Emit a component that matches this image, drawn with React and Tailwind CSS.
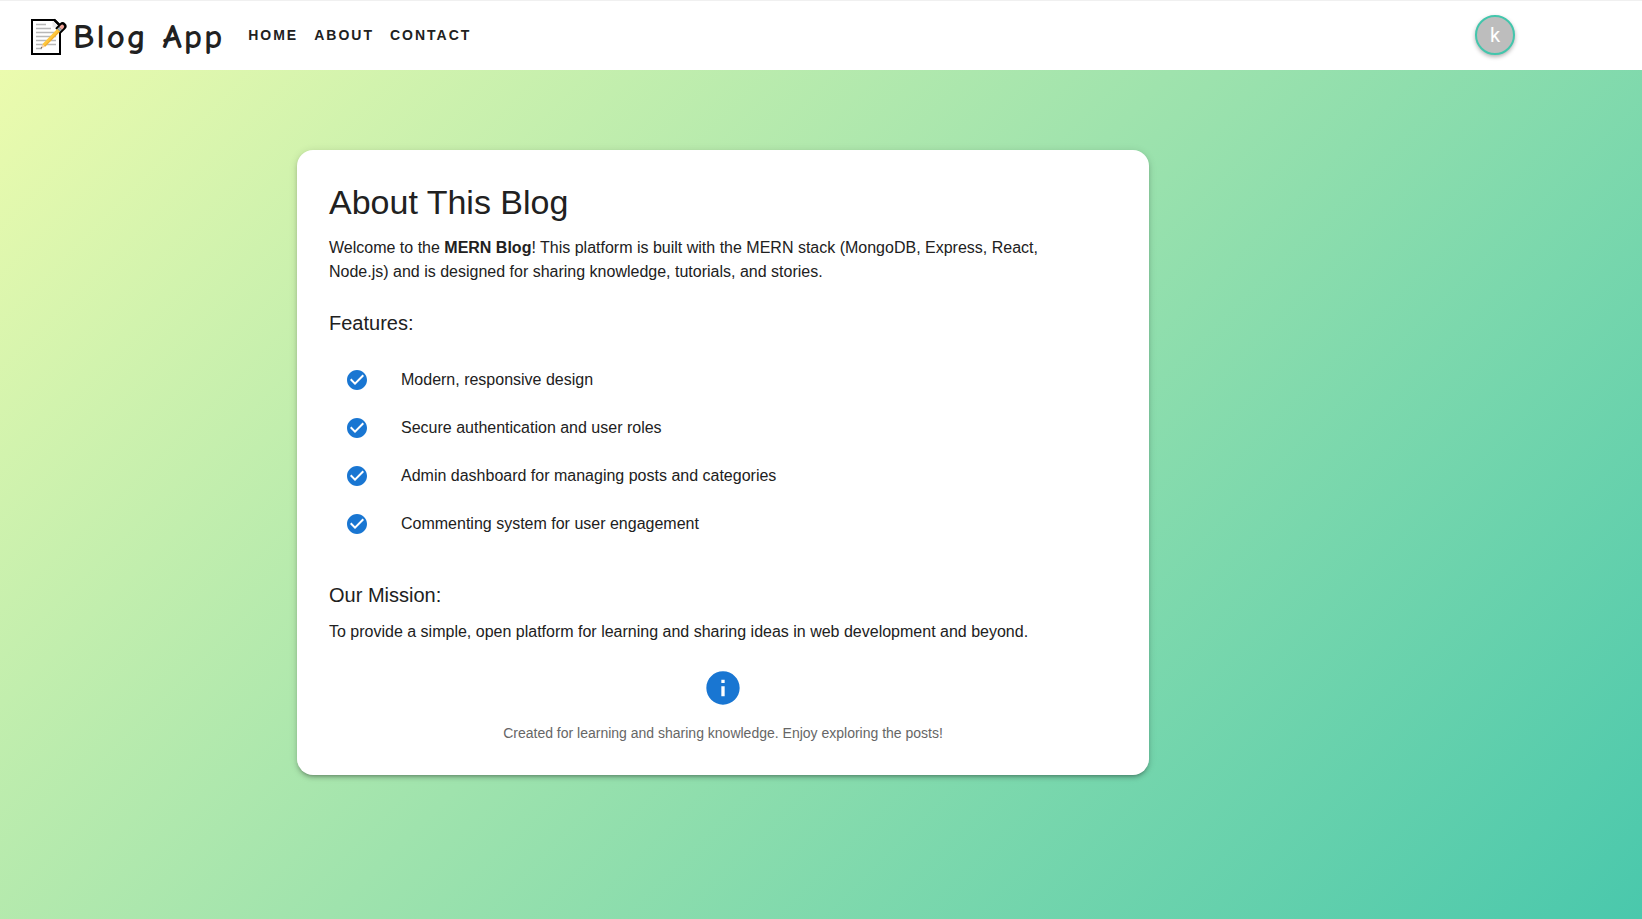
import React from "react";

const features = [
  "Modern, responsive design",
  "Secure authentication and user roles",
  "Admin dashboard for managing posts and categories",
  "Commenting system for user engagement",
];

const links = ["Home", "About", "Contact"];

function MemoIcon() {
  return (
    <svg viewBox="0 0 38 38" className="h-[38px] w-[38px] shrink-0" aria-hidden="true">
      <path d="M1 2H23.5L29 7.5V36H1Z" fill="#fff" stroke="#000" strokeWidth="2" />
      <path d="M21.5 3V9.5H28Z" fill="#e9e9e9" />
      <path
        d="M5 6.5H15M5 10.5H20M5 14.5H24M5 18.5H25M5 22.5H25M5 26.5H25M5 30.5H11"
        stroke="#b8b8b8"
        strokeWidth="1.3"
      />
      <path d="M23 1.6L30 8.6" stroke="#000" strokeWidth="2.4" />
      <g transform="translate(9.5 30.7) rotate(-45.5)">
        <path d="M25 -3.9H31.5A3.9 3.9 0 0 1 31.5 3.9H25Z" fill="#000" />
        <path d="M4.5 -1.9H26V1.9H4.5Z" fill="#ffc83d" />
        <path d="M4.5 0.7H26V1.9H4.5Z" fill="#f2ac2e" />
        <path d="M4.5 -1.9V1.9L0 0Z" fill="#f4d0a8" />
        <path d="M1.8 -0.8V0.8L0 0Z" fill="#555" />
        <path d="M26 -1.9H28.6V1.9H26Z" fill="#9fb4bd" />
        <path d="M28.6 -1.9H31A1.9 1.9 0 0 1 31 1.9H28.6Z" fill="#f0a498" />
      </g>
    </svg>
  );
}

function CheckCircle() {
  return (
    <svg viewBox="0 0 24 24" className="h-6 w-6 shrink-0 fill-[#1976d2]" aria-hidden="true">
      <path d="M12 2C6.48 2 2 6.48 2 12s4.48 10 10 10 10-4.48 10-10S17.52 2 12 2m-2 15-5-5 1.41-1.41L10 14.17l7.59-7.59L19 8z" />
    </svg>
  );
}

function InfoIcon() {
  return (
    <svg viewBox="0 0 24 24" className="h-10 w-10 fill-[#1976d2]" aria-hidden="true">
      <path d="M12 2C6.48 2 2 6.48 2 12s4.48 10 10 10 10-4.48 10-10S17.52 2 12 2m1 15h-2v-6h2zm0-8h-2V7h2z" />
    </svg>
  );
}

export default function App() {
  return (
    <div className="flex min-h-screen flex-col bg-linear-[135deg,#f8ffae_-5%,#43c6ac_104%] font-['Liberation_Sans',Arial,sans-serif] text-[#212121]">
      <header className="flex h-[70px] items-center bg-white pr-[127px] pl-[31px] shadow-[inset_0_1px_0_#f0f0f0]">
        <a href="#home" className="flex items-center gap-1 pt-1">
          <MemoIcon />
          <span className="font-['Comic_Sans_MS','Comic_Neue','Noto_Sans',sans-serif] text-[35px] leading-10 font-bold tracking-[2px]">
            Blog App
          </span>
        </a>
        <nav className="ml-6 flex gap-4">
          {links.map((label) => (
            <a
              key={label}
              href={"#" + label.toLowerCase()}
              className="text-sm font-bold tracking-[2px] uppercase"
            >
              {label}
            </a>
          ))}
        </nav>
        <button
          type="button"
          aria-label="Account"
          className="ml-auto flex h-10 w-10 items-center justify-center rounded-full border-2 border-[#43c6ac] bg-[#bdbdbd] font-['Roboto',sans-serif] text-xl leading-none text-white shadow-[0_2px_4px_rgba(0,0,0,0.3)]"
        >
          k
        </button>
      </header>

      <main className="pt-20 pr-[196px] pb-16">
        <section className="mx-auto w-full max-w-[852px] rounded-2xl bg-white p-8 shadow-[0_3px_3px_-2px_rgba(0,0,0,0.2),0_3px_4px_0_rgba(0,0,0,0.14),0_1px_8px_0_rgba(0,0,0,0.12)]">
          <h1 className="text-[34px] leading-10">About This Blog</h1>
          <p className="mt-[14px] max-w-[752px] text-base">
            Welcome to the <strong>MERN Blog</strong>! This platform is built with the MERN stack
            (MongoDB, Express, React, Node.js) and is designed for sharing knowledge, tutorials, and
            stories.
          </p>

          <h2 className="mt-6 text-xl leading-[30px]">Features:</h2>
          <ul className="mt-[10px] py-2">
            {features.map((text) => (
              <li key={text} className="flex h-12 items-center gap-8 px-4">
                <CheckCircle />
                <span className="text-base">{text}</span>
              </li>
            ))}
          </ul>

          <h2 className="mt-6 text-xl leading-[30px]">Our Mission:</h2>
          <p className="mt-[10px] text-base">
            To provide a simple, open platform for learning and sharing ideas in web development and
            beyond.
          </p>

          <div className="mt-6 flex flex-col items-center gap-[15px]">
            <InfoIcon />
            <p className="text-sm text-[#666666]">
              Created for learning and sharing knowledge. Enjoy exploring the posts!
            </p>
          </div>
        </section>
      </main>
    </div>
  );
}
